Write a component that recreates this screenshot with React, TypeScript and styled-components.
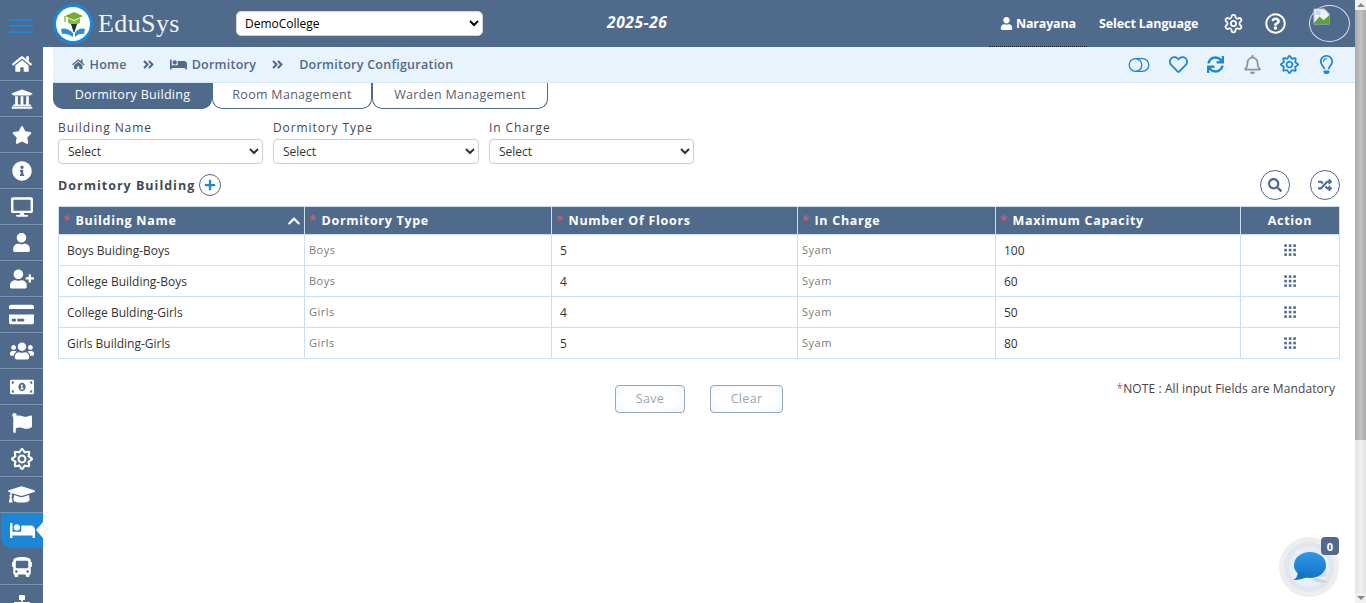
import React from 'react'
import styled, { createGlobalStyle } from 'styled-components'
import {
  FaAngleDoubleRight,
  FaBed,
  FaBus,
  FaChevronUp,
  FaCreditCard,
  FaDesktop,
  FaFlag,
  FaGraduationCap,
  FaHome,
  FaInfoCircle,
  FaMoneyBillAlt,
  FaPlus,
  FaRandom,
  FaRegBell,
  FaRegHeart,
  FaRegLightbulb,
  FaRegQuestionCircle,
  FaRegSun,
  FaSearch,
  FaSitemap,
  FaStar,
  FaSync,
  FaUniversity,
  FaUser,
  FaUserPlus,
  FaUsers,
} from 'react-icons/fa'
import { LuSettings } from 'react-icons/lu'

const SLATE = '#4f6a8a'
const BLUE = '#1b87d6'
const LINE = '#c9e0f1'

const GlobalStyle = createGlobalStyle`
  html, body {
    margin: 0;
    height: 100%;
    overflow: hidden;
    background: #fff;
    font-family: "Open Sans", "Noto Sans", sans-serif;
  }
  * { box-sizing: border-box; }
`

const Page = styled.div`
  position: relative;
  display: flex;
  width: 1366px;
  height: 603px;
  overflow: hidden;
`

const Screen = styled.div`
  width: 1355px;
  display: flex;
  flex-direction: column;
`

const Scrollbar = styled.div`
  width: 11px;
  display: flex;
  flex-direction: column;
  background: linear-gradient(90deg, #e2e2e2, #f0f0f0 50%, #e2e2e2);
`

const ScrollArrow = styled.div<{ $down?: boolean }>`
  height: 10px;
  display: flex;
  align-items: center;
  justify-content: center;
  background: #f1f1f1;
  &::after {
    content: '';
    border-left: 4px solid transparent;
    border-right: 4px solid transparent;
    ${(p) => (p.$down ? 'border-top: 4px solid #8a8a8a;' : 'border-bottom: 4px solid #8a8a8a;')}
  }
`

const ScrollThumb = styled.div`
  height: 430px;
  background: linear-gradient(90deg, #a9a9a9, #c2c2c2 50%, #a9a9a9);
`

const ScrollTrack = styled.div`
  flex: 1;
`

const TopBar = styled.header`
  height: 47px;
  flex: none;
  display: flex;
  align-items: center;
  background: ${SLATE};
  color: #fff;
`

const Hamburger = styled.div`
  width: 24px;
  margin-left: 9px;
  margin-top: 5px;
  display: flex;
  flex-direction: column;
  gap: 4px;
  span {
    height: 2px;
    background: ${BLUE};
  }
`

const LogoMark = styled.svg`
  width: 40px;
  height: 40px;
  margin-left: 20px;
  flex: none;
`

const Brand = styled.div`
  width: 138px;
  margin-left: 5px;
  font-family: "Liberation Serif", serif;
  font-size: 26px;
  letter-spacing: 0.4px;
  color: #f1f3f6;
`

const CollegeSelect = styled.select`
  width: 247px;
  height: 25px;
  padding: 0 4px;
  border: 1px solid #d5d5d5;
  border-radius: 5px;
  background: #fff;
  color: #000;
  font-family: inherit;
  font-size: 12px;
`

const Year = styled.div`
  width: 517px;
  padding-left: 124px;
  padding-bottom: 3px;
  font-size: 15.5px;
  font-weight: 700;
  font-style: italic;
  letter-spacing: 0.6px;
`

const UserBox = styled.div`
  position: relative;
  display: flex;
  align-items: center;
  gap: 3px;
  width: 99px;
  height: 47px;
  font-size: 12.5px;
  font-weight: 700;
  letter-spacing: -0.2px;
  svg { font-size: 13px; }
  &::after {
    content: '';
    position: absolute;
    left: -11px;
    right: 12px;
    bottom: 0;
    border-bottom: 1px dotted #17202b;
  }
`

const Language = styled.div`
  width: 124px;
  font-size: 12.5px;
  font-weight: 700;
  letter-spacing: -0.1px;
`

const TopIcon = styled.div`
  width: 42px;
  font-size: 21px;
  display: flex;
`

const Avatar = styled.div`
  width: 41px;
  height: 37px;
  margin-left: 2px;
  border: 1px solid #dfe5ec;
  border-radius: 50%;
  padding: 2px 0 0 3px;
`

const Body = styled.div`
  flex: 1;
  min-height: 0;
  display: flex;
`

const Sidebar = styled.nav`
  width: 43px;
  flex: none;
  overflow: hidden;
  background: ${SLATE};
`

const SideItem = styled.div<{ $active?: boolean; $first?: boolean; $size: number }>`
  position: relative;
  height: 36px;
  ${(p) => p.$first && 'height: 34px;'}
  display: flex;
  align-items: center;
  justify-content: center;
  color: #fff;
  font-size: ${(p) => p.$size}px;
  border-bottom: 1px solid #7b93ae;
  ${(p) =>
    p.$active &&
    `
    margin-left: 1px;
    background: ${BLUE};
    border-bottom-color: ${SLATE};
    border-radius: 0 0 4px 12px;
    &::after {
      content: '';
      position: absolute;
      right: 0;
      top: 9px;
      border-top: 8px solid transparent;
      border-bottom: 8px solid transparent;
      border-right: 7px solid #fff;
    }
  `}
`

const Content = styled.main`
  flex: 1;
  min-width: 0;
  padding-left: 10px;
`

const Breadcrumb = styled.div`
  height: 36px;
  display: flex;
  align-items: center;
  padding-left: 19px;
  background: #e8f3fc;
  border-bottom: 1px solid #cfe6f6;
  color: ${SLATE};
  font-size: 12.5px;
  font-weight: 600;
  letter-spacing: 0.25px;
`

const Crumb = styled.span`
  display: flex;
  align-items: center;
  gap: 5px;
`

const CrumbArrow = styled.span`
  display: flex;
  font-size: 13px;
  margin: 0 15px;
`

const QuickIcons = styled.div`
  margin-left: auto;
  margin-right: 19px;
  display: flex;
  align-items: center;
  gap: 17px;
  color: ${BLUE};
`

const QuickIcon = styled.span<{ $muted?: boolean; $size?: number }>`
  width: 20px;
  display: flex;
  justify-content: center;
  font-size: ${(p) => p.$size ?? 19}px;
  ${(p) => p.$muted && 'color: #8d9398;'}
`

const Tabs = styled.div`
  display: flex;
  height: 26px;
`

const Tab = styled.div<{ $active?: boolean; $width: number }>`
  width: ${(p) => p.$width}px;
  padding-bottom: 2px;
  display: flex;
  align-items: center;
  justify-content: center;
  font-size: 12.5px;
  letter-spacing: 0.3px;
  border-radius: 0 0 10px 10px;
  border: 1px solid ${SLATE};
  border-top: none;
  color: ${(p) => (p.$active ? '#fff' : '#55626f')};
  background: ${(p) => (p.$active ? SLATE : '#fff')};
`

const Panel = styled.div`
  padding: 10px 15px 0 5px;
`

const Filters = styled.div`
  display: grid;
  grid-template-columns: 205px 206px 205px;
  gap: 10px;
`

const Field = styled.label`
  display: flex;
  flex-direction: column;
  gap: 3px;
  color: #3f4a55;
  font-size: 12px;
  letter-spacing: 0.9px;
  line-height: 17px;
`

const FilterSelect = styled.select`
  height: 25px;
  padding: 0 5px;
  border: 1px solid #ccc;
  border-radius: 4px;
  background: #fff;
  color: #333;
  font-family: inherit;
  font-size: 12px;
  letter-spacing: 0;
`

const SectionRow = styled.div`
  height: 30px;
  margin-top: 6px;
  display: flex;
  align-items: center;
`

const SectionTitle = styled.div`
  color: #3f4a55;
  font-size: 12.5px;
  font-weight: 700;
  letter-spacing: 1px;
`

const AddButton = styled.span`
  width: 22px;
  height: 22px;
  margin-left: 4px;
  display: flex;
  align-items: center;
  justify-content: center;
  border: 1px solid ${SLATE};
  border-radius: 50%;
  color: ${BLUE};
  font-size: 12px;
`

const RoundButton = styled.span`
  width: 30px;
  height: 30px;
  display: flex;
  align-items: center;
  justify-content: center;
  border: 1px solid ${SLATE};
  border-radius: 50%;
  color: ${SLATE};
  font-size: 14px;
`

const RoundGroup = styled.div`
  margin-left: auto;
  display: flex;
  gap: 20px;
`

const Table = styled.table`
  width: 1281px;
  margin-top: 6px;
  border-collapse: collapse;
  table-layout: fixed;
`

const Th = styled.th<{ $center?: boolean }>`
  position: relative;
  height: 28px;
  padding: 0 4px 1px;
  border: 1px solid ${LINE};
  background: ${SLATE};
  color: #fff;
  font-size: 12.5px;
  font-weight: 700;
  letter-spacing: 0.7px;
  text-align: ${(p) => (p.$center ? 'center' : 'left')};
  i {
    color: #e0525c;
    font-style: normal;
    margin-right: 5px;
  }
`

const SortIcon = styled.span`
  position: absolute;
  right: 3px;
  top: 7px;
  font-size: 14px;
  display: flex;
`

const Td = styled.td<{ $muted?: boolean; $center?: boolean }>`
  height: 31px;
  padding: 0 8px;
  border: 1px solid ${LINE};
  color: #333;
  font-size: 12px;
  text-align: ${(p) => (p.$center ? 'center' : 'left')};
  ${(p) => p.$muted && 'padding: 0 4px 2px; color: #7b7b7b; font-size: 11px; letter-spacing: 0.5px;'}
`

const Dots = styled.svg`
  width: 12px;
  height: 12px;
  display: block;
  margin: 0 auto;
`

const FooterRow = styled.div`
  position: relative;
  margin-top: 26px;
  display: flex;
  justify-content: center;
  gap: 25px;
`

const GhostButton = styled.button<{ $width: number }>`
  width: ${(p) => p.$width}px;
  height: 28px;
  padding-bottom: 3px;
  border: 1px solid #94a7bb;
  border-radius: 4px;
  background: radial-gradient(ellipse at center, #fff 55%, #eef6fd 100%);
  color: #9aa5b1;
  font-family: inherit;
  font-size: 12.5px;
  letter-spacing: 0.3px;
`

const Note = styled.div`
  position: absolute;
  right: 5px;
  top: -5px;
  color: #444;
  font-size: 12px;
  letter-spacing: 0.1px;
  i {
    color: #e0525c;
    font-style: normal;
  }
`

const ChatWidget = styled.div`
  position: absolute;
  left: 1279px;
  top: 537px;
  width: 60px;
  height: 60px;
`

const ChatBadge = styled.span`
  position: absolute;
  right: 0;
  top: 0;
  width: 18px;
  height: 18px;
  border-radius: 4px;
  background: ${SLATE};
  color: #fff;
  font-size: 11px;
  font-weight: 700;
  display: flex;
  align-items: center;
  justify-content: center;
`

const SIDE_ICONS = [
  { Icon: FaHome, size: 20 },
  { Icon: FaUniversity, size: 22 },
  { Icon: FaStar, size: 20 },
  { Icon: FaInfoCircle, size: 20 },
  { Icon: FaDesktop, size: 22 },
  { Icon: FaUser, size: 19 },
  { Icon: FaUserPlus, size: 24 },
  { Icon: FaCreditCard, size: 25 },
  { Icon: FaUsers, size: 24 },
  { Icon: FaMoneyBillAlt, size: 24 },
  { Icon: FaFlag, size: 20 },
  { Icon: FaRegSun, size: 22 },
  { Icon: FaGraduationCap, size: 27 },
  { Icon: FaBed, size: 25 },
  { Icon: FaBus, size: 20 },
  { Icon: FaSitemap, size: 20 },
]

const ROWS = [
  ['Boys Buiding-Boys', 'Boys', '5', 'Syam', '100'],
  ['College Building-Boys', 'Boys', '4', 'Syam', '60'],
  ['College Bulding-Girls', 'Girls', '4', 'Syam', '50'],
  ['Girls Building-Girls', 'Girls', '5', 'Syam', '80'],
]

const COLUMNS = [
  { title: 'Building Name', width: 246 },
  { title: 'Dormitory Type', width: 247 },
  { title: 'Number Of Floors', width: 246 },
  { title: 'In Charge', width: 198 },
  { title: 'Maximum Capacity', width: 245 },
]

function Logo() {
  return (
    <LogoMark viewBox="0 0 40 40">
      <circle cx="20" cy="20" r="18.5" fill="#fff" stroke={BLUE} strokeWidth="3" />
      <path d="M12 12 L21 8 L30 12 L21 16 Z" fill="#6fae2e" />
      <path d="M15 14 V19 Q21 22 27 19 V14 L21 17 Z" fill="#86bd3c" />
      <path d="M12 12 V18" stroke="#6fae2e" strokeWidth="1.2" />
      <path d="M18 20 H24 L21.5 28 H20.5 Z" fill="#23303a" />
      <path
        d="M8 25 Q14 23 20 29 V33 Q14 29 9 30 Z M32 25 Q26 23 22 29 V33 Q26 29 31 30 Z"
        fill="#2a8fd8"
      />
    </LogoMark>
  )
}

function BrokenImage() {
  return (
    <svg width="17" height="17" viewBox="0 0 18 18">
      <path d="M1 1 H12 L17 6 V17 H1 Z" fill="#eef1f4" stroke="#b9c0c7" />
      <path d="M1 16 L7 9 L11 13 L17 8 V17 H1 Z" fill="#5aa33c" />
      <path d="M3 3 H8 V7 H3 Z" fill="#bcd3ee" />
    </svg>
  )
}

function ToggleRings() {
  return (
    <svg width="22" height="14" viewBox="0 0 22 14" fill="none" stroke={BLUE} strokeWidth="1.3" style={{ marginRight: 4, flex: 'none' }}>
      <circle cx="7.5" cy="7" r="6.3" />
      <path d="M7.5 .7 H14.5 A6.3 6.3 0 0 1 14.5 13.3 H7.5" />
    </svg>
  )
}

function GridDots() {
  const cells = [1.5, 6, 10.5]
  return (
    <Dots viewBox="0 0 12 12">
      {cells.map((y) =>
        cells.map((x) => <rect key={`${x}-${y}`} x={x - 1.2} y={y - 1.2} width="2.6" height="2.6" fill={SLATE} />)
      )}
    </Dots>
  )
}

function ChatBubble() {
  return (
    <svg width="60" height="60" viewBox="0 0 60 60">
      <defs>
        <linearGradient id="bubble" x1="0" y1="0" x2="0" y2="1">
          <stop offset="0" stopColor="#2f97e6" />
          <stop offset="1" stopColor="#1673c8" />
        </linearGradient>
      </defs>
      <circle cx="30" cy="30" r="30" fill="#eeeeee" />
      <circle cx="30" cy="30" r="25" fill="#e2e6ea" />
      <circle cx="30" cy="30" r="20" fill="#e4effb" />
      <path d="M34 41 Q46 42 49 46 Q41 46 35 44 Z" fill="#cfd5da" />
      <path d="M44 24 Q50 34 46 40 L36 40 Z" fill="#d8dde2" />
      <ellipse cx="31" cy="28" rx="16" ry="13" fill="url(#bubble)" />
      <path d="M19 34 Q19 41 14 43 Q24 43 29 39 Z" fill="#1673bd" />
    </svg>
  )
}

export default function App() {
  return (
    <Page>
      <GlobalStyle />
      <Screen>
        <TopBar>
          <Hamburger>
            <span />
            <span />
            <span />
          </Hamburger>
          <Logo />
          <Brand>EduSys</Brand>
          <CollegeSelect defaultValue="DemoCollege">
            <option>DemoCollege</option>
          </CollegeSelect>
          <Year>2025-26</Year>
          <UserBox>
            <FaUser />
            Narayana
          </UserBox>
          <Language>Select Language</Language>
          <TopIcon>
            <LuSettings />
          </TopIcon>
          <TopIcon>
            <FaRegQuestionCircle />
          </TopIcon>
          <Avatar>
            <BrokenImage />
          </Avatar>
        </TopBar>
        <Body>
          <Sidebar>
            {SIDE_ICONS.map(({ Icon, size }, index) => (
              <SideItem key={index} $size={size} $first={index === 0} $active={index === 13}>
                <Icon />
              </SideItem>
            ))}
          </Sidebar>
          <Content>
            <Breadcrumb>
              <Crumb>
                <FaHome />
                Home
              </Crumb>
              <CrumbArrow>
                <FaAngleDoubleRight />
              </CrumbArrow>
              <Crumb>
                <FaBed size={17} />
                Dormitory
              </Crumb>
              <CrumbArrow>
                <FaAngleDoubleRight />
              </CrumbArrow>
              <Crumb>Dormitory Configuration</Crumb>
              <QuickIcons>
                <QuickIcon>
                  <ToggleRings />
                </QuickIcon>
                <QuickIcon>
                  <FaRegHeart />
                </QuickIcon>
                <QuickIcon $size={17}>
                  <FaSync />
                </QuickIcon>
                <QuickIcon $muted>
                  <FaRegBell />
                </QuickIcon>
                <QuickIcon>
                  <FaRegSun />
                </QuickIcon>
                <QuickIcon>
                  <FaRegLightbulb />
                </QuickIcon>
              </QuickIcons>
            </Breadcrumb>
            <Tabs>
              <Tab $active $width={159}>
                Dormitory Building
              </Tab>
              <Tab $width={160}>Room Management</Tab>
              <Tab $width={176}>Warden Management</Tab>
            </Tabs>
            <Panel>
              <Filters>
                {['Building Name', 'Dormitory Type', 'In Charge'].map((label) => (
                  <Field key={label}>
                    {label}
                    <FilterSelect defaultValue="Select">
                      <option>Select</option>
                    </FilterSelect>
                  </Field>
                ))}
              </Filters>
              <SectionRow>
                <SectionTitle>Dormitory Building</SectionTitle>
                <AddButton>
                  <FaPlus />
                </AddButton>
                <RoundGroup>
                  <RoundButton>
                    <FaSearch />
                  </RoundButton>
                  <RoundButton>
                    <FaRandom />
                  </RoundButton>
                </RoundGroup>
              </SectionRow>
              <Table>
                <colgroup>
                  {COLUMNS.map((column) => (
                    <col key={column.title} style={{ width: column.width }} />
                  ))}
                  <col style={{ width: 99 }} />
                </colgroup>
                <thead>
                  <tr>
                    {COLUMNS.map((column, index) => (
                      <Th key={column.title}>
                        <i>*</i>
                        {column.title}
                        {index === 0 && (
                          <SortIcon>
                            <FaChevronUp />
                          </SortIcon>
                        )}
                      </Th>
                    ))}
                    <Th $center>Action</Th>
                  </tr>
                </thead>
                <tbody>
                  {ROWS.map((row) => (
                    <tr key={row[0]}>
                      <Td>{row[0]}</Td>
                      <Td $muted>{row[1]}</Td>
                      <Td>{row[2]}</Td>
                      <Td $muted>{row[3]}</Td>
                      <Td>{row[4]}</Td>
                      <Td $center>
                        <GridDots />
                      </Td>
                    </tr>
                  ))}
                </tbody>
              </Table>
              <FooterRow>
                <GhostButton $width={70}>Save</GhostButton>
                <GhostButton $width={73}>Clear</GhostButton>
                <Note>
                  <i>*</i>NOTE : All input Fields are Mandatory
                </Note>
              </FooterRow>
            </Panel>
          </Content>
        </Body>
      </Screen>
      <Scrollbar>
        <ScrollArrow />
        <ScrollThumb />
        <ScrollTrack />
        <ScrollArrow $down />
      </Scrollbar>
      <ChatWidget>
        <ChatBubble />
        <ChatBadge>0</ChatBadge>
      </ChatWidget>
    </Page>
  )
}
